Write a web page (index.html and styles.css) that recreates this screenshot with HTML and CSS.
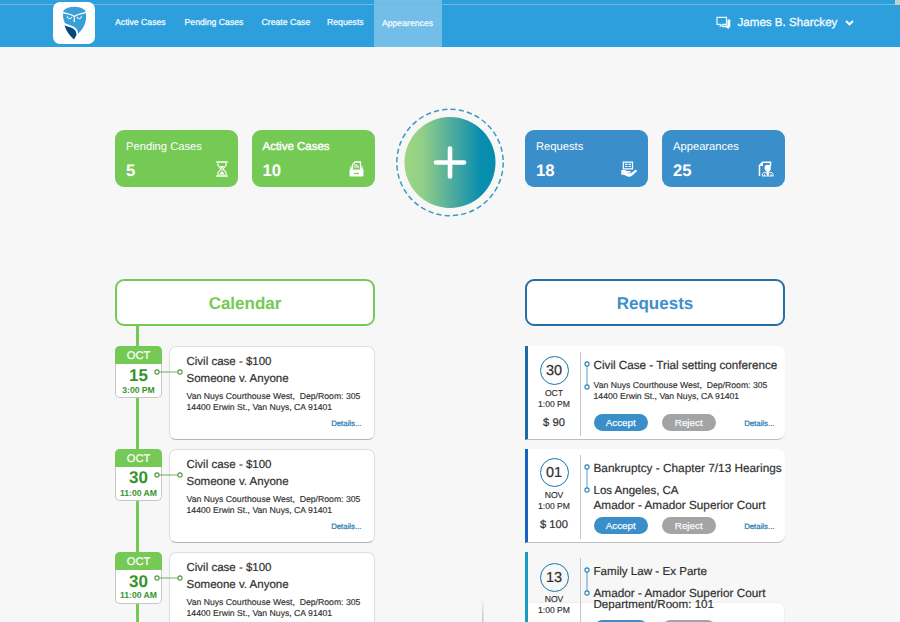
FILE: index.html
```
<!DOCTYPE html>
<html lang="en">
<head>
<meta charset="utf-8">
<title>Appearances dashboard</title>
<link rel="stylesheet" href="styles.css">
</head>
<body>
<header class="topbar">
  <div class="logo">
    <svg viewBox="0 0 42 42" width="42" height="42">
      <path d="M10.500 8.500C14 5.500 17.500 4.800 21.300 4.800S28.800 5.500 32.200 8.500C34.500 17 32.500 25 25 31.800C25.200 24 17 24 11.800 21C9.700 16.500 9.700 12.500 10.500 8.500z" fill="#3a9fd6"/>
      <path d="M11.500 23.500C16 25.200 23.700 25.500 23.500 33L21 37.500C16.500 33.500 13.500 29.500 11.500 23.500z" fill="#07497a"/>
      <path d="M9.500 10.300C13 12 18.500 11.500 21.300 14.700C24.200 11.500 30 12 33 10.300" fill="none" stroke="#fff" stroke-width="1.300"/>
      <path d="M14.300 14.200A2.200 2.200 0 1 0 18.700 14.800M24 14.800A2.200 2.200 0 1 0 28.400 14.200" fill="none" stroke="#fff" stroke-width="1"/>
      <path d="M21.300 15.500V20" stroke="#fff" stroke-width="1.300"/>
    </svg>
  </div>
  <nav class="nav">
    <a class="n1">Active Cases</a><a class="n2">Pending Cases</a><a class="n3">Create Case</a><a class="n4">Requests</a><a class="current">Appearences</a>
  </nav>
  <div class="user">
    <svg class="chat" viewBox="0 0 15 14" width="15" height="14">
      <path d="M11.500 3.500H14.300V11.300H12.800V13.300L10 11.300H6V9.500H11.500z" fill="#fff"/>
      <path d="M1 1.300H10.500V8.300H6.500L4.300 10.300V8.300H1z" fill="#2d9fdc" stroke="#e8f6fd" stroke-width="1.200"/>
    </svg>
    <span class="name">James B. Sharckey</span>
    <svg viewBox="0 0 9 7" width="9" height="7"><path d="M1 2L4.500 5.300L8 2" fill="none" stroke="#fff" stroke-width="2"/></svg>
  </div>
  <i class="topline"></i><i class="scroll"></i>
</header>
<main>
  <section class="summary">
    <div class="stats">
      <div class="stat green"><span class="label">Pending Cases</span><div class="figures"><b>5</b>
        <svg viewBox="0 0 12 16" width="12" height="16" fill="none" stroke="#fff"><path d="M.3 1H11.700M.3 15H11.700" stroke-width="1.500"/><path d="M2 2V4.500L5 8L2 11.500V14M10 2V4.500L7 8L10 11.500V14" stroke-width="1.100"/><path d="M3.500 5H8.500L6.300 7.300V10.500L9 13.500H3L5.700 10.500V7.300z" fill="#fff" stroke="none"/></svg>
      </div></div>
      <div class="stat green active"><span class="label">Active Cases</span><div class="figures"><b>10</b>
        <svg class="tray" viewBox="0 0 15 16" width="15" height="16"><path d="M3.500 8V3.500L6 1H11.500V8" fill="none" stroke="#fff" stroke-width="1.300"/><path d="M5 4H8M5 6H10M8 3V5H10M2 5V9M13 5V9" stroke="#fff"/><path d="M.5 9L2 7H3.500V8.500H11.500V7H13L14.500 9V14.500Q14.500 15.500 13.500 15.500H1.500Q.5 15.500 .5 14.500z" fill="#fff"/><path d="M5 12.500H10" stroke="#75c955" stroke-width="1.200"/></svg>
      </div></div>
    </div>
    <svg class="add" viewBox="0 0 110 110" width="110" height="110">
      <defs><linearGradient id="fade"><stop offset="0" stop-color="#9ed681"/><stop offset=".2" stop-color="#91cf88"/><stop offset=".5" stop-color="#54ad9c"/><stop offset=".84" stop-color="#098eae"/><stop offset="1" stop-color="#058dae"/></linearGradient></defs>
      <circle cx="55" cy="54.500" r="53.200" fill="none" stroke="#3c99c2" stroke-width="1.500" stroke-dasharray="5.300 3.057"/>
      <circle cx="55" cy="54.500" r="45.500" fill="url(#fade)"/>
      <path d="M55 40.500V68.500M41 54.500H69" stroke="#fff" stroke-width="4.600" stroke-linecap="round"/>
    </svg>
    <div class="stats">
      <div class="stat blue"><span class="label">Requests</span><div class="figures"><b>18</b>
        <svg class="hand" viewBox="0 0 16 16" width="16" height="16"><path d="M2.300 1.200H11.500V7.800H2.300zM4 3.300H6.500M4 5.500H6.500M7.500 3.300H10M7.500 5.500H10" fill="none" stroke="#fff" stroke-width="1.200"/><path d="M.3 9H3.500L6.500 10H9Q10.500 11 9 11.700H6.500V12.200H10L14 9Q16.300 8.300 15.700 10.500L11 14.700Q9 16.200 6.500 15.500L3 13.700H.3z" fill="#fff"/></svg>
      </div></div>
      <div class="stat blue"><span class="label">Appearances</span><div class="figures"><b>25</b>
        <svg class="person" viewBox="0 0 16 16" width="16" height="16"><path d="M1.500 15V4.500L4.500 1.300H12.500V5" fill="none" stroke="#fff" stroke-width="1.500"/><path d="M1 5L5 1V5z" fill="#fff"/><circle cx="9.700" cy="7" r="3.200" fill="#fff"/><path d="M8.500 9.500H11L10.500 14.500H9z" fill="#fff"/><path d="M4.500 15V13Q4.500 11.500 8 11L9.700 14.500L11.500 11Q15 11.500 15 13V15M4 15H15.500M6.500 13V15M13 13V15" fill="none" stroke="#fff" stroke-width=".9"/></svg>
      </div></div>
    </div>
  </section>
  <div class="columns">
    <section class="calendar">
      <h2>Calendar</h2>
      <div class="rows">
        <article class="event">
          <div class="date"><div class="month">OCT</div><div class="day">15</div><div class="time">3:00 PM</div></div>
          <div class="card"><p class="title">Civil case - $100</p><p class="parties">Someone v. Anyone</p><p class="addr">Van Nuys Courthouse West,&nbsp; Dep/Room: 305</p><p class="addr line2">14400 Erwin St., Van Nuys, CA 91401</p><a class="details">Details...</a></div>
          <svg class="link" viewBox="0 0 30 6" width="30" height="6"><path d="M5 3H24"/><circle cx="3" cy="3" r="2.100"/><circle cx="26" cy="3" r="2.100"/></svg>
        </article>
        <article class="event second">
          <div class="date"><div class="month">OCT</div><div class="day">30</div><div class="time">11:00 AM</div></div>
          <div class="card"><p class="title">Civil case - $100</p><p class="parties">Someone v. Anyone</p><p class="addr">Van Nuys Courthouse West,&nbsp; Dep/Room: 305</p><p class="addr line2">14400 Erwin St., Van Nuys, CA 91401</p><a class="details">Details...</a></div>
          <svg class="link" viewBox="0 0 30 6" width="30" height="6"><path d="M5 3H24"/><circle cx="3" cy="3" r="2.100"/><circle cx="26" cy="3" r="2.100"/></svg>
        </article>
        <article class="event third">
          <div class="date"><div class="month">OCT</div><div class="day">30</div><div class="time">11:00 AM</div></div>
          <div class="card"><p class="title">Civil case - $100</p><p class="parties">Someone v. Anyone</p><p class="addr">Van Nuys Courthouse West,&nbsp; Dep/Room: 305</p><p class="addr line2">14400 Erwin St., Van Nuys, CA 91401</p></div>
          <svg class="link" viewBox="0 0 30 6" width="30" height="6"><path d="M5 3H24"/><circle cx="3" cy="3" r="2.100"/><circle cx="26" cy="3" r="2.100"/></svg>
        </article>
      </div>
    </section>
    <i class="smudge"></i>
    <section class="requests">
      <h2>Requests</h2>
      <div class="rows">
        <article class="request">
          <div class="when"><div class="ring">30</div><p class="mon">OCT</p><p class="hour">1:00 PM</p><p class="fee">$ 90</p></div>
          <svg class="link" viewBox="0 0 6 30" width="6" height="30"><path d="M3 5V24"/><circle cx="3" cy="3" r="2.100"/><circle cx="3" cy="26" r="2.100"/></svg>
          <div class="body"><p class="title q1">Civil Case - Trial setting conference</p><div class="place small"><p class="addr">Van Nuys Courthouse West,&nbsp; Dep/Room: 305</p><p class="addr line2">14400 Erwin St., Van Nuys, CA 91401</p></div><div class="actions"><button>Accept</button><button class="reject">Reject</button><a class="details">Details...</a></div></div>
        </article>
        <article class="request second">
          <div class="when"><div class="ring">01</div><p class="mon">NOV</p><p class="hour">1:00 PM</p><p class="fee">$ 100</p></div>
          <svg class="link" viewBox="0 0 6 30" width="6" height="30"><path d="M3 5V24"/><circle cx="3" cy="3" r="2.100"/><circle cx="3" cy="26" r="2.100"/></svg>
          <div class="body"><p class="title q2">Bankruptcy - Chapter 7/13 Hearings</p><div class="place"><p class="la">Los Angeles, CA</p><p class="court">Amador - Amador Superior Court</p></div><div class="actions"><button>Accept</button><button class="reject">Reject</button><a class="details">Details...</a></div></div>
        </article>
        <article class="request third">
          <div class="when"><div class="ring">13</div><p class="mon">NOV</p><p class="hour">1:00 PM</p></div>
          <svg class="link" viewBox="0 0 6 30" width="6" height="30"><path d="M3 5V24"/><circle cx="3" cy="3" r="2.100"/><circle cx="3" cy="26" r="2.100"/></svg>
          <div class="body"><p class="title q3">Family Law - Ex Parte</p><div class="place"><p class="court">Amador - Amador Superior Court</p><p class="room">Department/Room: 101</p></div><div class="actions"><button></button><button class="reject"></button></div></div>
        </article>
      </div>
    </section>
  </div>
</main>
</body>
</html>
```
FILE: styles.css
```
* { box-sizing: border-box; margin: 0; padding: 0; }
html, body { height: 622px; overflow: hidden; }
body { background: #f7f7f7; color: #303030; font-family: "Liberation Sans", Arial, sans-serif; white-space: nowrap; text-rendering: geometricPrecision; }
svg { display: block; flex: none; }

.topbar { position: relative; display: flex; height: 47px; background: #2d9fdc; color: #f3fbff; }
.logo { width: 42px; height: 42px; margin: 2px 20px 0 53px; border-radius: 7px; background: #fff; z-index: 1; }
.nav { display: flex; font-size: 8.7px; line-height: 45px; -webkit-text-stroke: .25px; }
.nav a { display: block; }
.n1 { width: 69.5px; }
.n2 { width: 77px; }
.n3 { width: 65.5px; }
.n4 { width: 46.5px; }
.nav .current { width: 68px; text-align: center; background: #72bee8; line-height: 46px; }
.user { display: flex; align-items: center; height: 45px; margin-left: 274px; font-size: 11.6px; }
.name { width: 107px; margin-left: 7px; -webkit-text-stroke: .3px; }
.topline { position: absolute; inset: 4px 0 auto; height: 1px; background: #74b6d6; }
.scroll { position: absolute; right: 0; top: 0; width: 5px; height: 5px; background: #c6cdd2; }

.summary { display: flex; height: 232px; padding: 61px 115px 0; }
.stats { display: flex; gap: 14px; margin-top: 22px; }
.stat { width: 123px; height: 57px; padding: 10px 10px 0 11px; border-radius: 9px; color: #fff; }
.stats:first-child .stat:last-child { margin-left: -.5px; }
.green { background: #75c955; }
.blue { background: #3a8fca; }
.label { display: block; font-size: 11.2px; line-height: 15px; }
.active .label { font-size: 11.5px; -webkit-text-stroke: .4px; }
.figures { display: flex; justify-content: space-between; margin-top: 6px; font-size: 16.7px; line-height: 19px; }
.tray, .hand { margin-right: 1px; }
.person { margin-right: 1.5px; }
.add { margin: 0 20px; }
.stats:first-child { width: 260px; }

.columns { display: flex; justify-content: space-between; padding: 0 115px; position: relative; }
.calendar, .requests { width: 260px; }
h2 { height: 47px; border: 2px solid #75c955; border-radius: 9px; background: #fff; color: #75c955; font-size: 17px; line-height: 45px; text-align: center; }
.requests h2 { border-color: #246fa5; color: #3f8fca; }
.rows { display: flex; flex-direction: column; gap: 9px; padding-top: 20px; }
.calendar .rows { background: linear-gradient(#75c955, #75c955) 21px 0 / 3px 100% no-repeat; }
.event { position: relative; display: flex; justify-content: space-between; align-items: flex-start; height: 94px; }
.date { width: 47px; height: 52px; border: 1px solid #c6c6c6; border-top: 0; border-radius: 5px; background: #fff; color: #37942b; text-align: center; font-weight: bold; }
.month { height: 18px; margin: 0 -1px; border-radius: 5px 5px 0 0; background: #75c955; color: #fff; font-size: 11.2px; font-weight: normal; line-height: 20px; -webkit-text-stroke: .2px; }
.day { height: 20px; font-size: 17px; line-height: 23px; }
.time { font-size: 8.6px; line-height: 12px; }
.second .day { line-height: 22px; }
.third .day { line-height: 24px; }
.third .time { margin-top: -1px; }
.card { width: 206px; height: 94px; padding: 7px 12.500px 0 16.500px; border: 1px solid #dedede; border-bottom-color: #b5b5b5; border-radius: 7px; background: #fff; }
.title, .parties { font-size: 11.5px; line-height: 17px; -webkit-text-stroke: .2px; }
.addr { margin-top: 2px; font-size: 8.66px; line-height: 12px; -webkit-text-stroke: .15px; }
.addr.line2 { margin-top: -1px; }
.details { display: block; color: #1776ac; font-size: 7.8px; line-height: 12px; text-align: right; -webkit-text-stroke: .2px; }
.card .details { margin-top: 5px; }
.event .link { position: absolute; left: 39px; top: 23px; }
.link { fill: #fff; stroke: #4e9b3d; stroke-width: 1.1; }
.link path { stroke-width: .8; }

.request { position: relative; display: flex; height: 94px; border-left: 3px solid #1e6ba1; border-bottom: 1px solid #bfbfbf; border-radius: 0 8px 8px 0; background: #fff; }
.request.second { border-left-color: #1b61bf; }
.request.third { border-left-color: #179bc2; border-bottom: 0; background: none; border-radius: 0; z-index: 0; }
.request.third::before { content: ""; position: absolute; z-index: -1; inset: 50px 0 0; border: 1px solid #eee; border-left: 0; border-radius: 0 7px 0 0; background: #fff; }
.when { width: 53px; height: 84px; margin-top: 6px; border-right: 1px solid #bfc7c9; text-align: center; }
.ring { width: 29px; height: 29px; margin: 4px auto 0; border: 1.5px solid #1776a9; border-radius: 50%; font-size: 14.5px; line-height: 28px; -webkit-text-stroke: .2px; }
.second .ring { margin-top: 3px; }
.third .ring { margin-top: 5px; }
.mon, .hour { font-size: 8.6px; line-height: 12px; -webkit-text-stroke: .15px; }
.mon { margin-top: 2px; }
.hour { margin-top: -1px; }
.third .mon { margin-top: 1px; }
.fee { margin-top: 6px; font-size: 11.2px; line-height: 14px; -webkit-text-stroke: .2px; }
.request .link { margin: 15px 3.500px 0 3px; }
.request .link { stroke: #2585b8; }
.body { width: 190px; padding-top: 11px; font-size: 11.78px; }
.q1 { font-size: 11.7px; }
.q2 { font-size: 11.8px; }
.q3 { font-size: 11.6px; }
.place { height: 40px; padding-top: 7px; line-height: 15px; -webkit-text-stroke: .2px; }
.la { font-size: 11.5px; }
.court, .room { line-height: 14px; }
.third .place { height: 40px; }
.room { margin-top: -3px; font-size: 11.6px; }
.small { padding-top: 3px; }
.actions { display: flex; align-items: center; padding-right: 9px; }
button { width: 54.500px; height: 17px; margin-right: 13.500px; border: 0; border-radius: 9px; background: #3a8fca; color: #f5faff; font: 9.9px/17px "Liberation Sans", Arial, sans-serif; -webkit-text-stroke: .25px; }
button.reject { background: #a4a4a4; margin-right: 0; }
.actions .details { margin-left: auto; margin-top: 3px; }
.smudge { position: absolute; left: 482px; top: 317px; width: 2px; height: 26px; background: linear-gradient(90deg, #b6bab9, #e4e7e5); -webkit-mask: linear-gradient(transparent, #000); mask: linear-gradient(transparent, #000); }
```
